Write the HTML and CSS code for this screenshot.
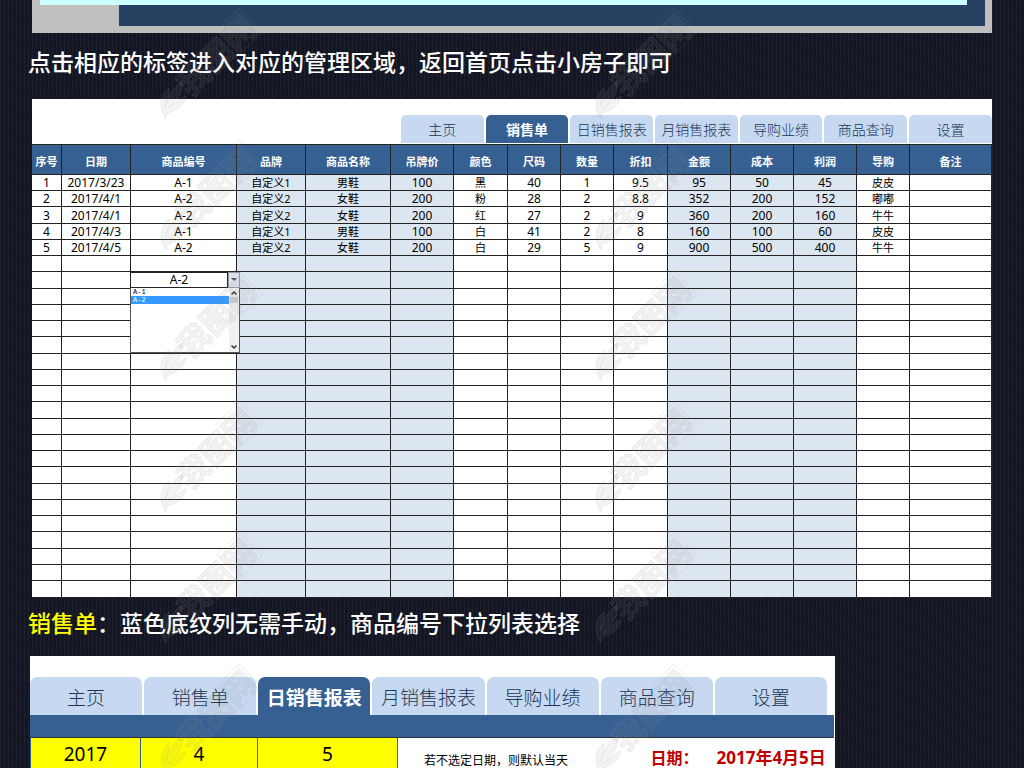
FILE: index.html
```html
<!DOCTYPE html>
<html lang="zh-CN">
<head>
<meta charset="utf-8">
<title>销售管理表格</title>
<link rel="stylesheet" href="styles.css">
</head>
<body>
<main class="page">
  <div class="preview"><div class="preview-body"></div><div class="preview-strip"></div></div>
  <p class="caption">点击相应的标签进入对应的管理区域，返回首页点击小房子即可</p>

  <section class="sheet">
    <nav class="tabs">
      <a class="tab" href="#home">主页</a>
      <a class="tab active" href="#sales">销售单</a>
      <a class="tab" href="#daily">日销售报表</a>
      <a class="tab" href="#monthly">月销售报表</a>
      <a class="tab" href="#staff">导购业绩</a>
      <a class="tab" href="#goods">商品查询</a>
      <a class="tab" href="#settings">设置</a>
    </nav>
    <table class="grid">
      <colgroup>
        <col class="c30"><col class="c69"><col class="c106"><col class="c69 auto"><col class="c85 auto"><col class="c63 auto"><col class="c54"><col class="c53"><col class="c53"><col class="c54"><col class="c63 auto"><col class="c63 auto"><col class="c63 auto"><col class="c53"><col class="c82">
      </colgroup>
      <thead>
        <tr><th>序号</th><th>日期</th><th>商品编号</th><th>品牌</th><th>商品名称</th><th>吊牌价</th><th>颜色</th><th>尺码</th><th>数量</th><th>折扣</th><th>金额</th><th>成本</th><th>利润</th><th>导购</th><th>备注</th></tr>
      </thead>
      <tbody id="rows"></tbody>
    </table>
  </section>

  <p class="caption second"><span class="mark">销售单</span>：蓝色底纹列无需手动，商品编号下拉列表选择</p>

  <section class="report">
    <nav class="tabs large">
      <a class="tab" href="#home">主页</a>
      <a class="tab" href="#sales">销售单</a>
      <a class="tab active" href="#daily">日销售报表</a>
      <a class="tab" href="#monthly">月销售报表</a>
      <a class="tab" href="#staff">导购业绩</a>
      <a class="tab" href="#goods">商品查询</a>
      <a class="tab" href="#settings">设置</a>
    </nav>
    <div class="bar"></div>
    <div class="picker">
      <span class="pick">2017</span><span class="pick">4</span><span class="pick">5</span>
      <div class="info"><span class="note">若不选定日期，则默认当天</span><strong class="label">日期：</strong><strong class="date">2017年4月5日</strong></div>
    </div>
  </section>

  <svg class="watermark" aria-hidden="true">
    <defs>
      <pattern id="wm" width="435" height="131" patternUnits="userSpaceOnUse">
        <g fill="#8c8c8c" fill-opacity=".1" stroke="#8c8c8c" stroke-opacity=".12" stroke-width="1">
          <path d="M166 122C158 110 160 98 169 91C170 98 167 103 165 110C169 98 174 89 182 84C184 94 178 103 168 112C175 106 181 101 186 99C184 109 176 114 167 116Z"/>
          <g transform="translate(188 98) rotate(-45)">
            <text class="wm-text" x="0" y="4">我图网</text>
            <rect x="65" y="-25" width="32" height="33" fill="none"/>
          </g>
        </g>
      </pattern>
    </defs>
    <rect width="100%" height="100%" fill="url(#wm)"/>
  </svg>
</main>
<script src="rows.js"></script>
</body>
</html>
```
FILE: styles.css
```css
* { box-sizing: border-box; }
body {
  margin: 0;
  overflow: hidden;
  color: #000;
  font-family: "Noto Sans", "Noto Sans CJK SC", sans-serif;
  background-color: #161825;
  background-image:
    repeating-linear-gradient(60deg, rgba(0,0,0,.24) 0 1px, transparent 1px 3px),
    repeating-linear-gradient(90deg, rgba(65,75,95,.2) 0 1px, transparent 1px 4px);
}
.page { position: relative; height: 100vh; overflow: hidden; }
.preview {
  position: relative;
  margin: 0 32px;
  padding: 0 7px 7px 87px;
  background: #c0c0c0;
}
.preview-body { height: 26px; background: #254061; }
.preview-strip {
  position: absolute;
  top: 0; left: 8px; right: 25px;
  height: 5px;
  background: #ccffff;
}
.caption {
  margin: 0;
  padding-left: 28px;
  height: 66px;
  font: 500 23px/56px "Noto Sans CJK SC", sans-serif;
  color: #fff;
  white-space: nowrap;
}
.caption.second { height: 58px; line-height: 48px; }
.mark { color: #ff0; }

.sheet { margin: 0 32px; padding-top: 16px; background: #fff; }
.tabs { display: flex; gap: 2px; width: 62%; margin-left: auto; padding-left: 4px; padding-bottom: 1px; }
.tab {
  flex: 1 1 0;
  height: 28px;
  border-radius: 5px 5px 0 0;
  background: #c6d9f1;
  color: #1c3555;
  font: 300 14px/29px "Noto Sans CJK SC", sans-serif;
  text-align: center;
  text-decoration: none;
  white-space: nowrap;
}
.tab.active { background: #366092; color: #fff; font-weight: 700; }

.grid { width: 100%; table-layout: fixed; border-spacing: 0; }
.c30 { width: 30px; } .c53 { width: 53px; } .c54 { width: 54px; }
.c63 { width: 63px; } .c69 { width: 69px; } .c82 { width: 82px; }
.c85 { width: 85px; } .c106 { width: 106px; }
.auto { background: #dce6f1; }
.grid th, .grid td {
  padding: 0;
  border-right: 1px solid #222;
  border-bottom: 1px solid #222;
  text-align: center;
  white-space: nowrap;
}
.grid th {
  height: 31px;
  border-top: 1px solid #222;
  background: #366092;
  color: #fff;
  font: 700 11px/14px "Noto Sans CJK SC", sans-serif;
  padding-top: 3px;
}
.grid td { height: 16px; font-size: 12px; line-height: 15px; }
.grid tr:nth-child(4n+3) td, .grid tr:last-child td { height: 17px; }
.grid td.han { font-size: 11px; }
.grid td.host { position: relative; }

.combo { position: absolute; z-index: 1; top: 0; left: -1px; width: 110px; }
.combo-row { display: flex; height: 16px; background: #fff; }
.combo select {
  flex: 1;
  appearance: none;
  margin: 0;
  padding: 0;
  border: 1px solid #222;
  border-radius: 0;
  background: #fff;
  color: #000;
  font: 12px/14px "Noto Sans", sans-serif;
  text-align: center;
  text-align-last: center;
}
.combo button {
  display: flex;
  align-items: center;
  justify-content: center;
  width: 12px;
  padding: 0;
  border: 1px solid #999;
  background: #dde3ee;
}
.list { display: flex; height: 65px; border: 1px solid #555; border-top: 0; background: #fff; }
.options { flex: 1; margin: 0; padding: 0; list-style: none; text-align: left; }
.options li { height: 8px; padding-left: 2px; font: 7px/8px "Liberation Mono", monospace; }
.options li.chosen { background: #3399ff; color: #fff; }
.scroll { display: flex; flex-direction: column; justify-content: space-between; width: 10px; padding: 2px 1px; background: #f0f0f0; }
.scroll i { flex: 0 0 6px; margin-top: 1px; margin-bottom: auto; background: #cdcdcd; }
.scroll svg { display: block; }

.report { width: 78.6%; margin-left: 30px; padding-top: 21px; background: #fff; }
.tabs.large { width: auto; padding: 0 8px 0 0; }
.large .tab { height: 38px; border-radius: 7px 7px 0 0; font-size: 19px; line-height: 39px; }
.bar { height: 23px; margin-right: 1px; background: #366092; border-bottom: 1px solid #333; }
.picker { display: grid; grid-template-columns: 111fr 117fr 140fr 437fr; height: 34px; }
.pick { background: #ff0; border-right: 1px solid #366092; font-size: 19px; line-height: 33px; text-align: center; }
.pick:first-child { border-left: 1px solid #366092; }
.info { display: flex; align-items: flex-start; padding: 11px 9px 0 26px; line-height: 18px; white-space: nowrap; }
.note { font: 12px/22px "Noto Sans CJK SC", sans-serif; }
.label { margin-left: auto; color: #c00000; font-size: 16px; }
.date { margin-left: 18px; color: #c00000; font-size: 17px; }

.watermark { position: absolute; z-index: 2; top: -3px; left: 0; width: 100%; height: 110%; pointer-events: none; }
.wm-text { font: 700 32px "Noto Sans CJK SC", sans-serif; }
```
FILE: rows.js
```js
const sales = [
  ["1", "2017/3/23", "A-1", "自定义1", "男鞋", "100", "黑", "40", "1", "9.5", "95", "50", "45", "皮皮", ""],
  ["2", "2017/4/1", "A-2", "自定义2", "女鞋", "200", "粉", "28", "2", "8.8", "352", "200", "152", "嘟嘟", ""],
  ["3", "2017/4/1", "A-2", "自定义2", "女鞋", "200", "红", "27", "2", "9", "360", "200", "160", "牛牛", ""],
  ["4", "2017/4/3", "A-1", "自定义1", "男鞋", "100", "白", "41", "2", "8", "160", "100", "60", "皮皮", ""],
  ["5", "2017/4/5", "A-2", "自定义2", "女鞋", "200", "白", "29", "5", "9", "900", "500", "400", "牛牛", ""]
];
const hanColumns = [3, 4, 6, 13];
const combo = `<div class="combo">
  <div class="combo-row"><select aria-label="商品编号"><option>A-1</option><option selected>A-2</option></select>
  <button type="button" aria-label="展开"><svg width="6" height="4"><path d="M0 0H6L3 3Z" fill="#555"/></svg></button></div>
  <div class="list"><ul class="options" role="listbox" aria-label="商品编号选项"><li role="option">A-1</li><li role="option" class="chosen" aria-selected="true">A-2</li></ul>
  <div class="scroll"><svg width="8" height="6"><path d="M1.5 4.5L4 2L6.5 4.5" fill="none" stroke="#333" stroke-width="1.5"/></svg><i></i><svg width="8" height="6"><path d="M1.5 1.5L4 4L6.5 1.5" fill="none" stroke="#333" stroke-width="1.5"/></svg></div></div>
</div>`;
const body = document.getElementById("rows");
for (let r = 0; r < 26; r++) {
  const tr = body.insertRow();
  for (let c = 0; c < 15; c++) {
    const td = tr.insertCell();
    if (sales[r]) td.textContent = sales[r][c];
    if (hanColumns.includes(c)) td.className = "han";
    if (r === 6 && c === 2) {
      td.className = "host";
      td.innerHTML = combo;
    }
  }
}
```
